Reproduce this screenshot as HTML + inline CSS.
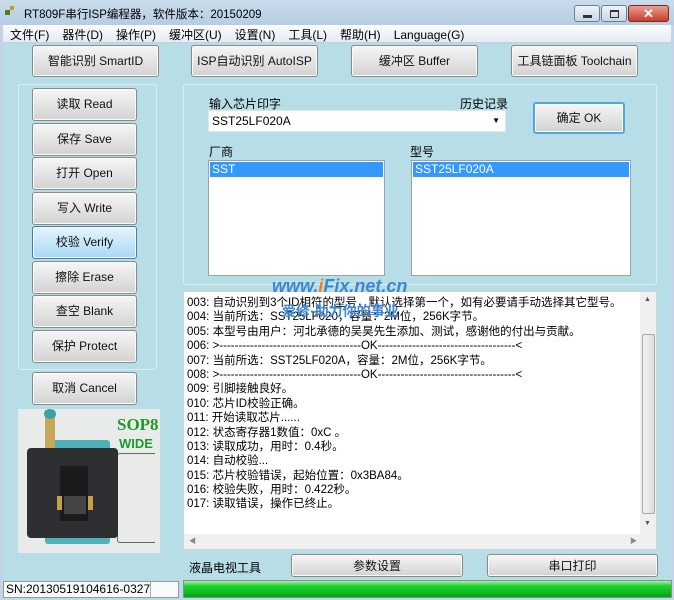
<!DOCTYPE html>
<html><head><meta charset="utf-8"><style>
*{margin:0;padding:0;box-sizing:border-box}
body{width:674px;height:600px;overflow:hidden;background:#b7dde6;font-family:"Liberation Sans","Noto Sans CJK SC",sans-serif;font-size:12px;color:#000;position:relative}
.a{position:absolute}
.btn{position:absolute;border:1px solid #8a8a8a;border-radius:3px;background:linear-gradient(#f6f6f6,#e4e4e4 50%,#d2d2d2);text-align:center;font-size:12px;color:#111;box-shadow:inset 0 0 0 1px #fbfbfb}
.grp{position:absolute;border:1px solid #dcecf0;border-radius:3px}
.list{position:absolute;background:#fff;border:1px solid #9aa4a8}
.sel{background:#3399ff;color:#fff;height:15px;line-height:15px;padding-left:2px;margin:1px}
.log div{height:14.4px;line-height:14.4px;white-space:nowrap}
</style></head><body>
<div class="a" style="left:0;top:0;width:674px;height:25px;background:linear-gradient(#c9dcec,#b7cde2)"></div>
<div class="a" style="left:5px;top:10px;width:5px;height:5px;background:#5a7a1a"></div>
<div class="a" style="left:10px;top:6px;width:4px;height:4px;background:#c89a2a"></div>
<div class="a" style="left:24px;top:6px;font-size:11.5px">RT809F串行ISP编程器，软件版本：20150209</div>
<div class="a" style="left:574px;top:5px;width:26px;height:17px;border:1px solid #6d7f95;border-radius:3px;background:linear-gradient(#eef3f9,#c8d6e6)"><div class="a" style="left:8px;top:9px;width:9px;height:3px;background:#333"></div></div>
<div class="a" style="left:601px;top:5px;width:26px;height:17px;border:1px solid #6d7f95;border-radius:3px;background:linear-gradient(#eef3f9,#c8d6e6)"><div class="a" style="left:8px;top:4px;width:9px;height:8px;border:1px solid #333;border-top-width:2px"></div></div>
<div class="a" style="left:628px;top:5px;width:41px;height:17px;border:1px solid #7a2a20;border-radius:3px;background:linear-gradient(#e8a090,#c4402c);color:#fff;font-weight:bold;text-align:center;line-height:15px;font-size:13px">✕</div>
<div class="a" style="left:3px;top:25px;width:668px;height:18px;background:linear-gradient(#fbfcfd,#e6ecf3);border-bottom:1px solid #ccd"></div>
<div class="a" style="left:10px;top:26px;white-space:nowrap"><span style="margin-right:13px">文件(F)</span><span style="margin-right:13px">器件(D)</span><span style="margin-right:13px">操作(P)</span><span style="margin-right:13px">缓冲区(U)</span><span style="margin-right:13px">设置(N)</span><span style="margin-right:13px">工具(L)</span><span style="margin-right:13px">帮助(H)</span><span>Language(G)</span></div>
<div class="a" style="left:0;top:25px;width:3px;height:575px;background:#c2d4e6"></div>
<div class="a" style="left:671px;top:25px;width:3px;height:575px;background:#c2d4e6"></div>
<div class="btn" style="left:32px;top:45px;width:127px;height:32px;line-height:30px">智能识别 SmartID</div>
<div class="btn" style="left:191px;top:45px;width:127px;height:32px;line-height:30px">ISP自动识别 AutoISP</div>
<div class="btn" style="left:351px;top:45px;width:127px;height:32px;line-height:30px">缓冲区 Buffer</div>
<div class="btn" style="left:511px;top:45px;width:127px;height:32px;line-height:30px">工具链面板 Toolchain</div>
<div class="grp" style="left:18px;top:84px;width:139px;height:286px"></div>
<div class="btn" style="left:32px;top:88px;width:105px;height:33px;line-height:31px">读取 Read</div>
<div class="btn" style="left:32px;top:123px;width:105px;height:33px;line-height:31px">保存 Save</div>
<div class="btn" style="left:32px;top:157px;width:105px;height:33px;line-height:31px">打开 Open</div>
<div class="btn" style="left:32px;top:192px;width:105px;height:33px;line-height:31px">写入 Write</div>
<div class="btn" style="left:32px;top:226px;width:105px;height:33px;line-height:31px;background:linear-gradient(#e6f5fd,#c6e7f8 50%,#a8d8f2);border-color:#3c7fb1">校验 Verify</div>
<div class="btn" style="left:32px;top:261px;width:105px;height:33px;line-height:31px">擦除 Erase</div>
<div class="btn" style="left:32px;top:295px;width:105px;height:33px;line-height:31px">查空 Blank</div>
<div class="btn" style="left:32px;top:330px;width:105px;height:33px;line-height:31px">保护 Protect</div>
<div class="btn" style="left:32px;top:372px;width:105px;height:33px;line-height:31px">取消 Cancel</div>
<div class="a" style="left:18px;top:409px;width:142px;height:144px;background:#e9ebea"></div>
<div class="a" style="left:117px;top:453px;width:38px;height:90px;border:1px solid #666;border-right:none;border-radius:3px 0 0 3px"></div>
<div class="a" style="left:45px;top:440px;width:65px;height:104px;background:#4fb0b5;border-radius:3px"></div>
<div class="a" style="left:45px;top:410px;width:10px;height:50px;background:#c9a85a"></div>
<div class="a" style="left:44px;top:409px;width:12px;height:10px;border-radius:50%;background:#3aa3a8"></div>
<div class="a" style="left:27px;top:448px;width:91px;height:90px;background:#2e2f33;border-radius:4px"></div>
<div class="a" style="left:60px;top:466px;width:28px;height:55px;background:#1b1b1c"></div>
<div class="a" style="left:64px;top:496px;width:22px;height:18px;background:#444"></div>
<div class="a" style="left:57px;top:496px;width:36px;height:14px;border-left:5px solid #c9a040;border-right:5px solid #c9a040"></div>
<div class="a" style="left:117px;top:415px;font-family:'Liberation Serif',serif;font-weight:bold;font-size:17px;color:#1f9a2a">SOP8</div>
<div class="a" style="left:119px;top:436px;font-weight:bold;font-size:13px;color:#1f9a2a">WIDE</div>
<div class="grp" style="left:183px;top:84px;width:474px;height:201px"></div>
<div class="a" style="left:209px;top:95px">输入芯片印字</div>
<div class="a" style="left:460px;top:95px">历史记录</div>
<div class="a" style="left:208px;top:110px;width:298px;height:22px;background:#fff;border:1px solid #dfe6ea;line-height:20px;padding-left:3px">SST25LF020A<span style="position:absolute;right:5px;top:0;font-size:8px">▼</span></div>
<div class="btn" style="left:533px;top:102px;width:92px;height:32px;line-height:28px;border:2px solid #4fa8d8">确定 OK</div>
<div class="a" style="left:209px;top:143px">厂商</div>
<div class="a" style="left:410px;top:143px">型号</div>
<div class="list" style="left:208px;top:160px;width:177px;height:116px"><div class="sel">SST</div></div>
<div class="list" style="left:411px;top:160px;width:220px;height:116px"><div class="sel">SST25LF020A</div></div>
<div class="a" style="left:183px;top:291px;width:474px;height:259px;background:#fff;border:1px solid #c8d4d8"></div>
<div class="a log" style="left:187px;top:296px;font-size:11.5px">
<div>003: 自动识别到3个ID相符的型号，默认选择第一个，如有必要请手动选择其它型号。</div>
<div>004: 当前所选：SST25LF020，容量：2M位，256K字节。</div>
<div>005: 本型号由用户：河北承德的吴昊先生添加、测试，感谢他的付出与贡献。</div>
<div>006: &gt;-------------------------------------OK------------------------------------&lt;</div>
<div>007: 当前所选：SST25LF020A，容量：2M位，256K字节。</div>
<div>008: &gt;-------------------------------------OK------------------------------------&lt;</div>
<div>009: 引脚接触良好。</div>
<div>010: 芯片ID校验正确。</div>
<div>011: 开始读取芯片......</div>
<div>012: 状态寄存器1数值：0xC 。</div>
<div>013: 读取成功，用时：0.4秒。</div>
<div>014: 自动校验...</div>
<div>015: 芯片校验错误，起始位置：0x3BA84。</div>
<div>016: 校验失败，用时：0.422秒。</div>
<div>017: 读取错误，操作已终止。</div>
</div>
<div class="a" style="left:640px;top:292px;width:16px;height:242px;background:#f0f0f0"></div>
<div class="a" style="left:642px;top:334px;width:13px;height:180px;background:linear-gradient(90deg,#f3f3f3,#dcdcdc);border:1px solid #aaa;border-radius:2px"></div>
<div class="a" style="left:644px;top:296px;font-size:7px;color:#555">▲</div>
<div class="a" style="left:644px;top:520px;font-size:7px;color:#555">▼</div>
<div class="a" style="left:184px;top:534px;width:456px;height:15px;background:#f0f0f0"></div>
<div class="a" style="left:189px;top:536px;font-size:7px;color:#888">◀</div>
<div class="a" style="left:630px;top:536px;font-size:7px;color:#888">▶</div>
<div class="a" style="left:640px;top:534px;width:16px;height:15px;background:#f0f0f0"></div>
<div class="a" style="left:272px;top:276px;font-size:18px;font-style:italic;font-weight:bold;color:#3a86d8">www.<span style="color:#f08020">i</span>Fix.net.cn</div>
<div class="a" style="left:282px;top:301px;font-size:14px;font-weight:bold;color:#3a86d8">爱修·助力你的事业</div>
<div class="a" style="left:189px;top:559px">液晶电视工具</div>
<div class="btn" style="left:291px;top:554px;width:172px;height:23px;line-height:22px">参数设置</div>
<div class="btn" style="left:487px;top:554px;width:171px;height:23px;line-height:22px">串口打印</div>
<div class="a" style="left:3px;top:580px;width:668px;height:20px;background:#b7dde6"></div>
<div class="a" style="left:3px;top:581px;width:176px;height:17px;background:#fafafa;border:1px solid #999"></div>
<div class="a" style="left:150px;top:582px;width:1px;height:15px;background:#aaa"></div>
<div class="a" style="left:6px;top:582px">SN:20130519104616-0327</div>
<div class="a" style="left:183px;top:580px;width:489px;height:18px;border:1px solid #8c8c8c;background:linear-gradient(#a8f0a8,#20d030 30%,#08c020 70%,#0a9a18)"></div>
</body></html>
